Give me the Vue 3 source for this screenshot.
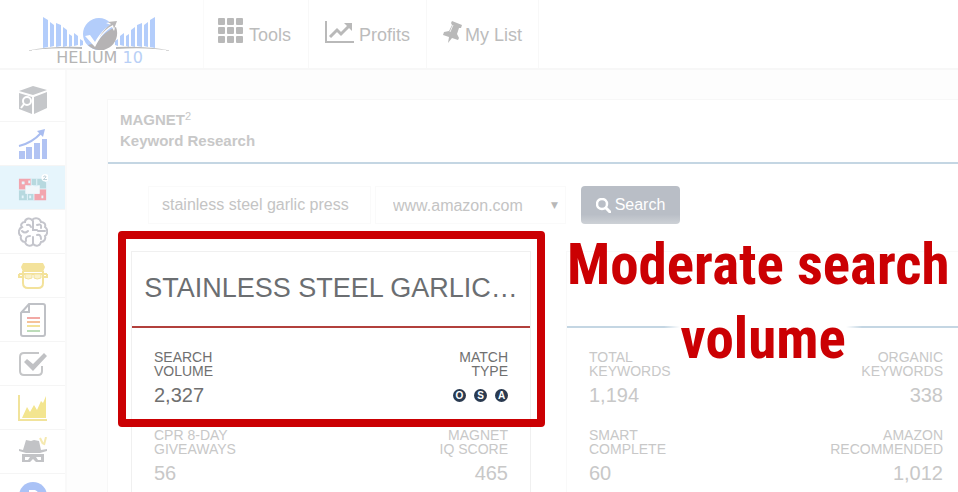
<template>
  <div class="page">
    <header class="topbar">
      <a href="#" class="brand" aria-label="Helium 10">
        <svg class="brand-mark" viewBox="0 0 150 38" aria-hidden="true">
          <g fill="#b3cdfb">
            <path d="M18 3l5 3v27l-5 1zM25 8l4 3v21l-4 1zM31 9l5 2v21l-5 1zM38 13l4 3v16l-4 1zM44 20l3 2v10l-3 1zM49 19l4 3v9l-4 1zM55 25l3 2v4l-3 1z" />
            <path d="M130 3l-5 3v27l5 1zM123 8l-4 3v21l4 1zM117 9l-5 2v21l5 1zM110 13l-4 3v16l4 1zM104 20l-3 2v10l3 1zM99 19l-4 3v9l4 1zM93 25l-3 2v4l3 1z" />
            <circle cx="74" cy="20" r="16" />
          </g>
          <path d="M91 13a17 17 0 0 1-28 18l4-1 3 2c5-9 11-15 21-19z" fill="#b5b3b4" />
          <path d="M60 22l5-1 5 7c5-9 10-14 16-17l-5-2 11-2-3 10-2-4c-7 4-12 10-17 20z" fill="#fff" />
          <path d="M83 8l9-1-3 8-1-4c-6 3-11 8-14 13 3-6 7-10 12-14z" fill="#b9b7b8" />
          <path d="M1 37Q25 32 57 33v2Q25 33 1 37zM147 37Q123 32 91 33v2q32-2 56 2z" fill="#b9b9b9" />
        </svg>
        <span class="brand-name">HELIUM <span>10</span></span>
      </a>
      <nav class="tabs">
        <a href="#" class="tab tab-tools">
          <svg width="26" height="26" viewBox="0 0 26 26" fill="#b9b9b9" aria-hidden="true">
            <rect v-for="n in 9" :key="n" :x="((n - 1) % 3) * 9" :y="Math.floor((n - 1) / 3) * 9" width="7" height="7" rx="1" />
          </svg>
          <span>Tools</span>
        </a>
        <a href="#" class="tab tab-profits">
          <svg width="29" height="23" viewBox="0 0 29 23" fill="none" aria-hidden="true">
            <path d="M1 0v21h28" stroke="#b9b9b9" stroke-width="2" />
            <path d="M5 16l7-7 4 4 8-8" stroke="#b9b9b9" stroke-width="3" />
            <path d="M19 2h8v8z" fill="#b9b9b9" />
          </svg>
          <span>Profits</span>
        </a>
        <a href="#" class="tab tab-list">
          <svg width="20" height="22" viewBox="0 0 20 22" aria-hidden="true">
            <path d="M9 0l10 4-1 3-2 0-2 6 2 4-1 2-6-2-4 5 1-6-6-2 1-3 5-1 3-6-1-2z" fill="#b9b9b9" />
            <path d="M10 4l-3 7" stroke="#f2f2f2" stroke-width="1" />
          </svg>
          <span>My List</span>
        </a>
      </nav>
    </header>

    <div class="body">
      <aside class="sidebar">
        <a href="#" class="side" aria-label="Product research">
          <svg viewBox="0 0 30 30">
            <path d="M1 6l14-5 14 4-14 5zM1 8l13 4v17L1 24zM16 12l13-5v16l-13 6z" fill="#c5c7ca" />
            <circle cx="9" cy="16" r="4" fill="none" stroke="#fff" stroke-width="2" />
            <path d="M6 19l-3 4" stroke="#fff" stroke-width="2" />
          </svg>
        </a>
        <a href="#" class="side" aria-label="Trends">
          <svg viewBox="0 0 30 30">
            <path d="M1 22h6v8H1zM8 18h6v12H8zM16 14h6v16h-6zM24 10h5v20h-5z" fill="#b1c3f3" />
            <path d="M1 17Q14 14 23 4" fill="none" stroke="#a9bdf0" stroke-width="2" />
            <path d="M19 2l8-2-2 8z" fill="#a9bdf0" />
          </svg>
        </a>
        <a href="#" class="side active" aria-label="Magnet">
          <svg viewBox="0 0 32 30">
            <path d="M1 5h13v7H8v5H1z" fill="#f2a5ae" />
            <path d="M17 21h6v-5h7v12H17z" fill="#f2a5ae" />
            <path d="M1 17h7v4h9v7H1zM14 5h12l4 4v7h-7v-4h-9z" fill="#b7d9df" />
            <path d="M14 5v7M20 5v7M1 17h7M23 16h7M10 21v7M17 21v7" fill="none" stroke="#e6f5fc" />
            <path d="M4 8h3v3H4zM11 7h2v3h-2zM4 23h2v3H4zM12 23h2v3h-2zM25 23h2v3h-2z" fill="#e6f5fc" />
            <path d="M8 12l4 2 3-2 4 2 4-2v9H8z" fill="#f2f8fb" />
            <circle cx="29" cy="4" r="4" fill="#fff" />
            <path d="M27 3q2-2 3 0l-3 3h4" fill="none" stroke="#b5ccd5" />
          </svg>
        </a>
        <a href="#" class="side" aria-label="Cerebro">
          <svg viewBox="0 0 30 30" fill="none" stroke="#c4c5cc" stroke-width="2" stroke-linecap="round">
            <path d="M14 3c-3-3-7-1-7 2-3 0-5 3-3 5-4 2-4 7-1 9-1 3 1 6 4 6 1 4 6 5 8 2 3 3 7 2 8-2 3 0 5-3 4-6 3-2 3-7 0-9 1-3-1-5-4-5-1-4-6-5-9-2z" />
            <path d="M15 4v9h4M4 14q3 3 6 0M9 8q3-1 4 2M8 24q-1-5 4-5M15 27v-7M19 8q5-2 4 3M20 14h7M19 18q4-1 4 4" />
          </svg>
        </a>
        <a href="#" class="side" aria-label="Scribbles">
          <svg viewBox="0 0 30 30">
            <path d="M5 2h20l2 4-2 5H5L3 6z" fill="#f3e29b" />
            <path d="M5 10v12q0 5 5 5h10q5 0 5-5V10M1 13h28M1 13v3h4M29 13v3h-4" fill="none" stroke="#f3e29b" stroke-width="2" />
            <path d="M7 13h7v4q-4 2-7 0zM16 13h7v4q-4 2-7 0z" fill="#faf2cd" stroke="#f3e29b" />
          </svg>
        </a>
        <a href="#" class="side" aria-label="Index checker">
          <svg class="tall" viewBox="0 0 26 34">
            <path d="M9 1h14q2 0 2 2v28q0 2-2 2H3q-2 0-2-2V10zM9 1v8H1" fill="none" stroke="#bfc1c6" stroke-width="2" />
            <path d="M7 15h13" stroke="#f2a9a5" stroke-width="2" />
            <path d="M7 19h13" stroke="#f5c29a" stroke-width="2" />
            <path d="M7 23h13" stroke="#f3e29b" stroke-width="2" />
            <path d="M7 28h13" stroke="#bcdcb9" stroke-width="2" />
          </svg>
        </a>
        <a href="#" class="side" aria-label="Checklist">
          <svg viewBox="0 0 30 30">
            <path d="M21 4H6Q2 4 2 8v14q0 4 4 4h14q4 0 4-4v-5" fill="none" stroke="#c5c6c8" stroke-width="2" />
            <path d="M6 13l3-3 6 5L26 4l3 3-14 15z" fill="#c0c1c4" />
          </svg>
        </a>
        <a href="#" class="side" aria-label="Profits chart">
          <svg viewBox="0 0 30 30">
            <path d="M1 2v25h28" fill="none" stroke="#f1e39b" stroke-width="2" />
            <path d="M4 25l5-11 3 5 4-7 3 5 4-9 2 2 3-7v22z" fill="#f3e58f" />
          </svg>
        </a>
        <a href="#" class="side" aria-label="Black box">
          <svg viewBox="0 0 30 30">
            <path d="M5 13l3-10 5 1 3-1 5 1 2 9 6-1v2l-7 2H8l-7-2v-2z" fill="#c2c3c6" />
            <path d="M4 17h22v8h-8l-3-3-3 3H4z" fill="#c2c3c6" />
            <path d="M7 20h5l-2 3H7zM18 20h5v3h-3z" fill="#fff" />
            <path d="M22 1l3 6M28 0l-2 8" stroke="#f5e9b0" stroke-width="2" />
          </svg>
        </a>
        <a href="#" class="side" aria-label="Tutorials">
          <svg viewBox="0 0 30 30">
            <circle cx="15" cy="15" r="14" fill="#aac2f6" />
            <path d="M11 9h6q5 2 3 7l-9 7z" fill="#fff" />
          </svg>
        </a>
      </aside>

      <main class="main">
        <section class="panel">
          <h1 class="panel-title">MAGNET<sup>2</sup><br />Keyword Research</h1>

          <form class="search" @submit.prevent>
            <input v-model="keyword" type="text" aria-label="Keyword" />
            <div class="select">
              <select v-model="market" aria-label="Marketplace">
                <option>www.amazon.com</option>
              </select>
              <span class="arrow">▼</span>
            </div>
            <button type="submit">
              <svg width="15" height="15" viewBox="0 0 15 15" fill="none" stroke="#fff" aria-hidden="true">
                <circle cx="6" cy="6" r="5" stroke-width="2.5" />
                <path d="M10 10l4 4" stroke-width="3" stroke-linecap="round" />
              </svg>
              Search
            </button>
          </form>

          <div class="cards">
            <article class="card keyword-card">
              <h2>STAINLESS STEEL GARLIC…</h2>
              <dl class="stats">
                <div class="stat strong">
                  <dt>SEARCH<br />VOLUME</dt>
                  <dd>2,327</dd>
                </div>
                <div class="stat strong">
                  <dt>MATCH<br />TYPE</dt>
                  <dd class="badges"><span v-for="m in matchTypes" :key="m">{{ m }}</span></dd>
                </div>
                <div v-for="s in keywordStats" :key="s.value" class="stat">
                  <dt>{{ s.label[0] }}<br />{{ s.label[1] }}</dt>
                  <dd>{{ s.value }}</dd>
                </div>
              </dl>
              <div class="frame"></div>
            </article>

            <article class="card">
              <h2></h2>
              <dl class="stats">
                <div v-for="s in totals" :key="s.value" class="stat">
                  <dt>{{ s.label[0] }}<br />{{ s.label[1] }}</dt>
                  <dd>{{ s.value }}</dd>
                </div>
              </dl>
              <p class="callout">Moderate search<br /><span class="cover">volume</span></p>
            </article>
          </div>
        </section>
      </main>
    </div>
  </div>
</template>

<script setup>
import { ref } from 'vue'

const keyword = ref('stainless steel garlic press')
const market = ref('www.amazon.com')

const matchTypes = ['O', 'S', 'A']

const keywordStats = [
  { label: ['CPR 8-DAY', 'GIVEAWAYS'], value: '56' },
  { label: ['MAGNET', 'IQ SCORE'], value: '465' }
]

const totals = [
  { label: ['TOTAL', 'KEYWORDS'], value: '1,194' },
  { label: ['ORGANIC', 'KEYWORDS'], value: '338' },
  { label: ['SMART', 'COMPLETE'], value: '60' },
  { label: ['AMAZON', 'RECOMMENDED'], value: '1,012' }
]
</script>

<style>
body {
  margin: 0;
  background: #fdfdfd;
}
</style>

<style scoped>
.page {
  height: 100vh;
  display: flex;
  flex-direction: column;
  overflow: hidden;
  font-family: "Liberation Sans", Arial, sans-serif;
  color: #c8c8c8;
}

.page * {
  box-sizing: border-box;
}

a {
  color: inherit;
  text-decoration: none;
}

.topbar {
  flex: none;
  display: flex;
  height: 70px;
  background: #fff;
  border-bottom: 2px solid #f7f7f7;
}

.brand {
  display: flex;
  flex-direction: column;
  align-items: center;
  width: 204px;
  padding: 14px 4px 0 0;
  border-right: 1px solid #fafafa;
}

.brand-mark {
  width: 150px;
  height: 38px;
}

.brand-name {
  font: 16px/12px "DejaVu Sans", sans-serif;
  color: #b5b5b5;
}

.brand-name span {
  color: #b9d0f6;
}

.tabs {
  display: flex;
}

.tab {
  display: flex;
  align-items: flex-start;
  gap: 5px;
  padding: 18px 17px 0 14px;
  border-right: 1px solid #f8f8f8;
  font-size: 18px;
  line-height: 20px;
  color: #bcbcbc;
}

.tab span {
  padding-top: 7px;
}

.tab-profits,
.tab-list {
  padding-right: 16px;
  padding-left: 16px;
}

.tab-list {
  gap: 2px;
}

.tab-profits svg,
.tab-list svg {
  margin-top: 3px;
}

.body {
  flex: 1;
  display: flex;
  min-height: 0;
}

.sidebar {
  flex: none;
  width: 67px;
  padding-top: 8px;
  background: #fff;
  border-right: 2px solid #f9f9f9;
  overflow: hidden;
}

.side {
  display: flex;
  align-items: center;
  justify-content: center;
  height: 44px;
  border-bottom: 1px solid #f5f5f5;
}

.side.active {
  background: #e6f5fc;
}

.side svg {
  width: 30px;
  height: 30px;
}

.side svg.tall {
  width: 26px;
  height: 34px;
}

.main {
  flex: 1;
  min-width: 0;
  padding: 29px 0 0 40px;
}

.panel {
  background: #fff;
  border: 1px solid #f7f7f7;
  border-right: none;
}

.panel-title {
  margin: 0;
  padding: 9px 12px 11px;
  border-bottom: 2px solid #c4d6e3;
  font-size: 15px;
  line-height: 21px;
  font-weight: bold;
  color: #c8c8c8;
}

.panel-title sup {
  font-size: 11px;
  line-height: 0;
  font-weight: normal;
  vertical-align: 5px;
}

.search {
  display: flex;
  padding: 22px 40px 27px;
}

.search input,
.search select {
  height: 38px;
  border: 1px solid #fafafa;
  background: #fff;
  font: 16px "Liberation Sans", Arial, sans-serif;
  color: #c4c4c4;
}

.search input {
  width: 223px;
  padding: 0 13px;
}

.select {
  position: relative;
  margin: 0 15px 0 4px;
}

.search select {
  width: 191px;
  padding: 0 17px;
  appearance: none;
}

.arrow {
  position: absolute;
  right: 8px;
  top: 14px;
  font: 9px/10px "DejaVu Sans", sans-serif;
  color: #b8b8b8;
  pointer-events: none;
}

.search button {
  display: flex;
  align-items: center;
  justify-content: center;
  gap: 4px;
  width: 99px;
  height: 38px;
  border: none;
  border-radius: 4px;
  background: linear-gradient(#b9bec6 75%, #cdd1d6);
  font: 16px "Liberation Sans", Arial, sans-serif;
  color: #fff;
}

/* the second card runs past the right edge */
.cards {
  display: grid;
  grid-template-columns: 1fr 1fr;
  gap: 35px;
  margin: 0 -8px 0 23px;
}

.card {
  position: relative;
  border: 1px solid #f9f9f9;
}

.keyword-card {
  border-color: #f0f0f0;
}

.card h2 {
  height: 76px;
  margin: 0;
  padding: 20px 0 22px;
  border-bottom: 2px solid #c4d6e3;
  font-size: 27px;
  line-height: 32px;
  font-weight: normal;
  text-align: center;
  white-space: nowrap;
  color: #6b6e71;
}

.keyword-card h2 {
  border-bottom-color: #b2403c;
}

.stats {
  display: grid;
  grid-template-columns: 1fr 1fr;
  row-gap: 23px;
  margin: 0;
  padding: 22px;
}

.stat:nth-child(even) {
  text-align: right;
}

.stat dt {
  font-size: 14px;
  line-height: 14px;
}

.stat dd {
  height: 20px;
  margin: 7px 0 0;
  font-size: 20px;
  line-height: 20px;
}

.strong {
  color: #707070;
}

.badges {
  display: flex;
  align-items: center;
  justify-content: flex-end;
  gap: 8px;
}

.badges span {
  width: 13px;
  height: 13px;
  border-radius: 50%;
  background: #2a3a50;
  font-size: 10px;
  line-height: 13px;
  font-weight: bold;
  text-align: center;
  color: #fff;
}

/* highlight drawn over the card */
.frame {
  position: absolute;
  top: -21px;
  left: -14px;
  right: -15px;
  height: 196px;
  border: 8px solid #cb0003;
  border-radius: 4px;
}

.callout {
  position: absolute;
  top: -24px;
  left: 0;
  right: 18px;
  margin: 0;
  font: bold 57px/74px "Roboto Condensed", Roboto, sans-serif;
  text-align: center;
  white-space: nowrap;
  color: #cb0003;
}

/* hides the card rule on both sides of the word */
.cover {
  display: inline-block;
  margin-left: 12px;
  padding: 0 16px;
  line-height: 44px;
  background: linear-gradient(90deg, transparent, #fff 8%, #fff 92%, transparent) 0 0 / 100% 24px no-repeat;
}
</style>
